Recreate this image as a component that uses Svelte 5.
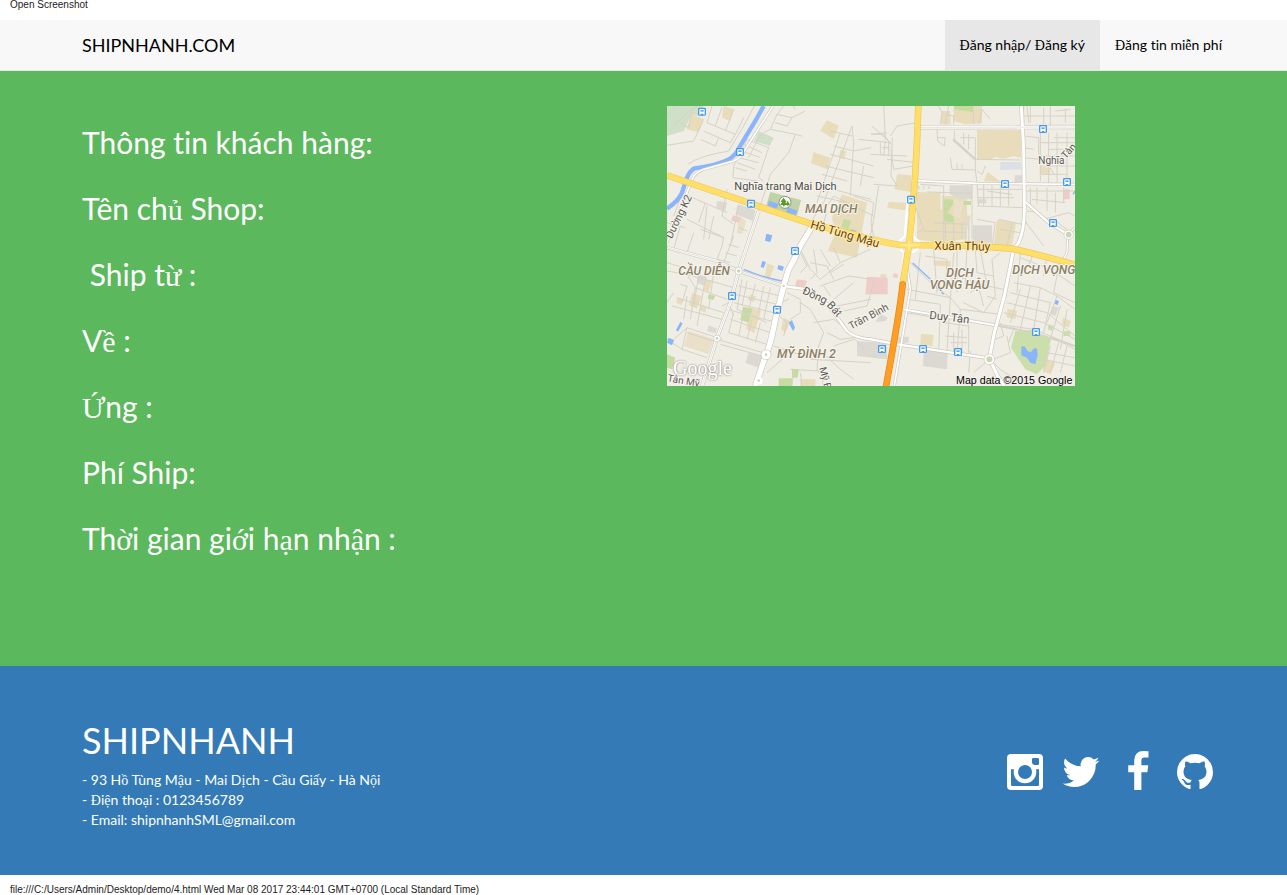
<script>
  const fields = [
    'Thông tin khách hàng:',
    'Tên chủ Shop:',
    '\u00a0Ship từ :',
    'Về :',
    'Ứng :',
    'Phí Ship:',
    'Thời gian giới hạn nhận :',
  ];

  const address = [
    '- 93 Hồ Tùng Mậu - Mai Dịch - Cầu Giấy - Hà Nội',
    '- Điện thoại : 0123456789',
    '- Email: shipnhanhSML@gmail.com',
  ];

  const nav = [
    { label: 'Đăng nhập/ Đăng ký', active: true },
    { label: 'Đăng tin miễn phí', active: false },
  ];

  // Vietnamese letters outside the brand font's basic set are set in the serif.
  const split = (text) => text.split(/([ĐđƠơƯư\u1ea0-\u1ef9]+)/).filter(Boolean);
  const isExtended = (part) => /^[ĐđƠơƯư\u1ea0-\u1ef9]/.test(part);

  const social = [
    { name: 'Twitter', d: 'M1684 408q-67 98-162 167 1 14 1 42 0 130-38 259.5t-115.5 248.5-184.5 210.5-258 146-323 54.5q-271 0-496-145 35 4 78 4 225 0 401-138-105-2-188-64.5t-114-159.5q33 5 61 5 43 0 85-11-112-23-185.5-111.5t-73.5-205.5v-4q68 38 146 41-66-44-105-115t-39-154q0-88 44-163 121 149 294.5 238.5t371.5 99.5q-8-38-8-74 0-134 94.5-228.5t228.5-94.5q140 0 236 102 109-21 205-78-37 115-142 178 93-10 186-50z' },
    { name: 'Facebook', d: 'M1343 12v264h-157q-86 0-116 36t-30 108v189h293l-39 296h-254v759h-306v-759h-255v-296h255v-218q0-186 104-288.5t277-102.5q147 0 228 12z' },
    { name: 'GitHub', d: 'M896 128q209 0 385.5 103t279.5 279.5 103 385.5q0 251-146.5 451.5t-378.5 277.5q-27 5-40-7t-13-30q0-3 .5-76.5t.5-134.5q0-97-52-142 57-6 102.5-18t94-39 81-66.5 53-105 20.5-150.5q0-119-79-206 37-91-8-204-28-9-81 11t-92 44l-38 24q-93-26-192-26t-192 26q-16-11-42.5-27t-83.5-38.5-85-13.5q-45 113-8 204-79 87-79 206 0 85 20.5 150t52.5 105 80.5 67 94 39 102.5 18q-39 36-49 103-21 10-45 15t-57 5-65.5-21.5-55.5-62.5q-19-32-48.5-52t-49.5-24l-20-3q-21 0-29 4.5t-5 11.5 9 14 13 12l7 5q22 10 43.5 38t31.5 51l10 23q13 38 44 61.5t67 30 69.5 7 55.5-3.5l23-4q0 38 .5 88.5t.5 54.5q0 18-13 30t-40 7q-232-77-378.5-277.5t-146.5-451.5q0-209 103-385.5t279.5-279.5 385.5-103z' },
  ];

  // Map drawing uses three units per pixel.
  const minor = [
    // north-west
    'M0 118L80 105L110 40M62 175Q95 150 185 135L230 60L262 0M20 60L65 15L90 0M40 50L65 65L75 10M0 30L30 0',
    'M120 50L135 0M120 50L205 85L230 35M110 75L190 110L205 85M145 60L165 5M175 75L200 10M100 100L145 120L155 95M330 25L375 35L415 15M325 50L360 60L375 35M350 0L330 25L310 70L385 85L365 140L310 205L275 315M310 70L290 80M385 85L405 90M385 10L375 -5',
    'M240 100L305 125L275 215L290 225M230 115L285 140M225 135L280 155M215 155L275 170M210 170L265 190M205 185L240 195M198 215L270 225M240 100L200 180L198 215M280 85L245 155M60 225L20 330M65 270L180 320M115 290L95 350M60 340L170 395L165 420M180 250L165 330L200 355M120 300L110 400M215 300L190 420M0 350L55 365M215 365L240 375',
    'M100 370L170 395M140 330L125 400M165 420L150 460L190 470M200 390L170 470M185 415L215 425M175 440L210 450M20 430L40 360M60 440L80 380',
    // north centre
    'M555 60L470 290L430 350M520 80L450 290M555 60L560 110L550 270M490 75L555 90M500 120L560 135L612 125M490 145L620 180M475 180L620 215M465 205L540 225M460 240L612 280M450 270L540 290M430 300L480 315M590 180L580 240M575 100L670 110M615 60L670 110M612 85L650 85L672 115M670 90L690 60L750 50M676 95L672 210L690 240L620 235M655 105L650 150M610 145L720 150M560 270L620 290L612 350L625 420M470 315L500 270L620 330',
    'M480 315L470 350M555 300L545 330M650 -5L655 100M612 85L660 80M635 240L620 340L610 390M740 180L680 190L672 130M750 170L660 160M640 110V145M665 110V150M645 125H670',
    // north-east
    'M815 0L825 20L820 55M845 0L835 55M835 25L860 30L860 55M920 55L918 10M935 55L945 10L970 40M810 70L812 105L832 120L835 95L812 95M862 75V100M862 100L925 160M880 95H925V160M890 80V115M905 85V130M925 160L1060 162M850 155L855 190L925 192V160M870 172V190M885 175V190M925 192L930 230M955 180L945 205L930 195M1070 0V50M1070 30H1224M1090 0V50M1130 5V55M1150 0V60M1165 15L1210 10M1195 10V50M1070 75V165M1070 90L1115 95V155M1070 125L1100 130M1070 155L1120 160M1120 80V225M1145 80V240M1170 80V240M1200 80V220M1120 110H1224M1145 130H1190M1120 150H1224M1120 180H1224M1125 205H1200M1160 95H1224M1150 185L1160 205M1080 0L1085 50',
    'M760 235L830 240L830 420M780 258L915 262M915 235V400M930 235L935 300M930 250H1070M950 235V300M975 235V300M1000 235V300M1025 235V300M930 275H1040M930 300L1070 305M960 255L1035 265M800 350L900 355M835 340V400M860 345V420M885 350V400M770 375L895 380M745 300L770 370L750 380M930 340L985 350L975 420M995 340L1065 355M1035 350L1020 420M1000 370L1060 380M1075 235L1070 290M1075 255H1224M1090 245V310M1110 245V295M1140 245V315M1165 260V320M1190 245V290M1095 280L1195 290M1080 315L1120 320M1130 340L1205 320L1224 330M1160 340L1205 375M1070 340L1130 420',
    // south-west
    'M0 495L60 505L85 545L70 640M30 575L170 620M15 600L165 640M60 505L200 545M85 545L180 580M95 510L80 600M115 520L90 660M140 500L125 610M60 570L50 640M0 590L20 560M40 535L60 540L45 590M60 665L165 700M60 665L45 730L120 755M60 680L140 705M20 700L60 665M0 700L45 730M180 610L330 650M165 600L185 590L200 630M0 470L100 500',
    'M225 520L210 610L300 650M240 525L225 600M265 535L245 610M290 540L275 620M310 545L290 640M215 540L340 570M205 565L330 595M200 590L320 620M190 640L310 680M200 620L185 680L300 715M230 620L215 690M255 640L240 700M280 650L265 710M150 700L305 745M160 715L285 750M340 590L365 580M325 620L360 650L350 690',
    'M400 430L430 490L460 520L520 470L610 430M400 500L420 480L400 440M440 430L450 500L430 520M460 430L490 480M430 470L480 480L500 520M490 500L530 475M500 425L520 470M460 540L545 510L612 520M500 580L560 530M510 600L612 580M530 615L600 600L620 530M360 560L400 580L400 620L370 640M400 590L430 610L470 680L455 720L450 790L470 820M440 650L500 640L540 670M480 680L520 700L560 695L590 730M500 720L560 700M455 730L520 790L560 820M370 790L460 795L470 840M320 720L440 760M380 800L375 840M400 800L405 840M300 800L345 760M430 760L612 770M490 570L470 540',
    // south centre and east
    'M730 470L800 540L850 575L880 610L1000 625M760 440L745 580M800 430L810 560M775 450L840 460L835 550M860 440L850 580L840 735M870 510L960 540M900 420L895 530M940 430L960 540L1010 550M870 425V560M720 550L850 575M725 580L820 595M715 620L840 640M820 595L815 740M880 610L870 740M890 590L950 620L985 570L975 460L1000 440M925 430L930 500L980 510M935 545L950 600M960 570L990 580M910 560L960 520M910 735L905 800M835 690L900 695M860 680V735M885 670V740M850 710H900M830 650L905 660M905 640V740',
    'M1060 440L1050 560M1060 455L1150 490L1224 540M1100 440L1085 480L1050 500M1140 450L1130 510M1180 460L1160 560L1224 590M1040 530L1120 545L1170 570L1140 650M1030 560L1150 590M1020 590L1140 620L1224 690M1010 620L1130 650L1224 700M995 655L1100 670L1224 720M1060 550L1030 650M1090 540L1060 670M1120 545L1100 670M1150 590L1130 680M1170 570L1224 610M1180 600L1150 700M1200 610L1180 730M1150 690L1224 730M1130 760L1224 780M1140 740L1224 755M1150 720L1130 800M1175 710L1150 800M1200 720L1180 800M1020 690L1030 740L980 760M970 760L1000 790L1060 830M920 800L960 765M1040 670L1025 710M1000 650L1010 690M985 700L1010 690',
  ];

  const whiteRoads = [
    { d: 'M318 0L270 75L235 130Q222 155 200 165L110 190Q85 200 78 215L60 260L0 410', w: 5 },
    { d: 'M0 425L150 465L215 495L350 540L420 550Q470 575 500 620L540 675Q560 695 612 700L692 715L967 757', w: 7 },
    { d: 'M275 315L240 420L215 495L190 590L150 695L105 840', w: 8 },
    { d: 'M436 360L400 420Q380 465 365 490Q355 520 350 540L325 640Q310 720 297 745L265 840', w: 16 },
    { d: 'M762 64L1224 63', w: 9 },
    { d: 'M1063 0L1070 130L1072 290Q1074 370 1055 410L1040 430L1012 570L982 680L967 757L992 810L1012 840', w: 9 },
    { d: 'M747 224L932 232L1224 235', w: 5 },
    { d: 'M1072 285L1145 350L1202 385', w: 7 },
    { d: 'M707 610L982 657', w: 6 },
    { d: 'M1202 385L1224 365M1202 385L1200 440L1180 480', w: 4 },
    { d: 'M712 430L730 550L682 840', w: 5 },
  ];

  const stops = [
    [105, 17], [219, 138], [252, 293], [384, 435], [195, 570], [330, 611],
    [1128, 69], [1014, 234], [1200, 228], [732, 281], [1158, 351],
    [645, 729], [768, 729], [873, 738], [1107, 678],
  ];
</script>

<div class="page">
  <p class="print">Open Screenshot</p>

  <header>
    <div class="container bar">
      <a class="brand" href="#home">SHIPNHANH.COM</a>
      <nav>
        {#each nav as item}
          <a href="#account" class:active={item.active}>{#each split(item.label) as part}{#if isExtended(part)}<span class="ext">{part}</span>{:else}{part}{/if}{/each}</a>
        {/each}
      </nav>
    </div>
  </header>

  <main>
    <div class="container columns">
      <section class="fields">
        {#each fields as field}
          <h2>{#each split(field) as part}{#if isExtended(part)}<span class="ext">{part}</span>{:else}{part}{/if}{/each}</h2>
        {/each}
      </section>

      <section class="place">
        <svg class="map" viewBox="0 0 1224 840" role="img" aria-label="Hồ Tùng Mậu">
          <rect width="1224" height="840" fill="#f0ede5" />

          <g fill="#d0dfc8">
            <path d="M0 0H110L95 30L75 25L50 75L0 90zM275 75L320 95L308 120L262 105z" />
            <path d="M310 258L402 282L390 330L295 308z" fill="#bfd3a6" />
          </g>
          <g fill="#e8dcbb">
            <path d="M170 0L200 10L190 45L165 35zM75 25L110 40L95 78L58 70zM480 42L515 60L500 98L460 75zM440 138L490 155L482 190L432 172zM520 132L538 136L532 160L516 156z" />
            <path d="M525 265L600 290L570 455L482 435L505 380L495 335zM825 15H850V55H822zM860 0H945V52L895 55L860 45zM930 72H1062V155L1040 150L1010 158L985 152L970 162H930zM690 205L732 208V258L682 250zM665 288L728 290V315L660 305z" />
            <path d="M750 258L820 260V310L912 330L890 400L820 410L750 400zM825 270H900V400H825zM990 342L1047 350L1035 420H980zM962 198L1002 228L950 226zM1120 182L1152 186L1148 205H1118z" />
            <path d="M75 562L105 570L90 608L65 598zM118 520L135 524L125 558L110 552zM102 595L120 602L115 620L98 612zM250 605L282 615L262 680L238 670zM250 565L268 572L260 588L242 582zM350 635L370 645L355 680L342 670zM300 472L322 480L308 518L294 508zM30 575L48 582L42 598L28 590z" />
            <path d="M762 684L800 686L796 720L760 716zM1022 608L1050 614L1045 640L1018 634zM1135 760L1165 770L1150 805L1128 795zM802 463L852 465L850 482L800 478zM1188 635L1212 645L1205 665L1184 655zM400 820H445V840H400zM642 503L660 506L655 516L640 512z" />
          </g>
          <g fill="#eadfc9">
            <path d="M65 675L140 700L125 745L50 720zM862 280L888 285L882 338L858 330zM215 330L238 345L225 385L210 380z" />
          </g>
          <g fill="#dcd9d3">
            <path d="M212 295L265 312L258 345L205 325zM150 285L180 290L175 315L148 305zM245 740L285 750L275 785L235 770zM770 730L842 735L840 790L768 780zM92 505L120 512L112 540L90 530zM125 658L150 668L145 682L120 675zM570 705L660 712V760L570 750zM692 692H725V710H692zM640 625L662 635L655 645L625 648z" />
            <path d="M848 238H915V280H880L848 265zM918 358H975V410H918zM932 280H958V292H932zM1043 208H1068V228H1043zM1158 600L1175 605L1165 630L1150 625z" />
            <path d="M1000 168H1062V190L1000 192z" fill="#dcdfe6" />
          </g>
          <g fill="#eecdc9">
            <path d="M198 328L222 334L216 350L192 344zM390 520L420 524L414 545L384 540zM600 512L662 515V565L595 565zM680 502L692 504V516L678 514zM1190 250H1208V280H1187z" />
          </g>
          <g fill="#c5dba0">
            <path d="M530 338L552 345L545 370L524 362zM228 602L256 608L245 650L220 642zM125 565L145 570L138 582L122 578zM158 490L170 494L166 506L154 502zM0 745L25 755L15 790L0 785zM375 788L395 790L392 815H375zM335 817H375V840H335zM862 0H920L918 18L862 10zM830 280H858V295L840 320L860 330V350L830 345zM890 285H912V297H890z" />
            <path d="M1045 675L1095 672L1152 698L1135 780L1110 805L1075 790L1055 760L1032 725zM1145 655L1160 660L1155 675L1142 670zM1190 675H1210V690H1190z" fill="#cbdfaa" />
          </g>

          <g fill="none" stroke="#d6d2c6" stroke-width="3" stroke-linejoin="round">
            {#each minor as d}<path {d} />{/each}
            <path d="M858 100L925 160" stroke-width="7" />
            <path d="M982 657L1100 680L1224 720" stroke-width="6" />
          </g>
          <path d="M895 335V420M905 335V420M755 240V250M770 240V250M785 240V250" stroke="#dcd9d3" stroke-width="5" />

          <g fill="#8ab4fb">
            <path d="M306 284L335 294L325 315L300 306zM362 303L392 315L385 328L357 320zM298 383L316 388L310 408L294 404zM552 370L568 375L564 386L550 382zM286 465L297 468L290 486L281 483zM334 477L351 482L346 495L331 489zM375 642L384 665L378 675L365 650zM40 648L47 652L33 677L27 672zM5 695L21 702L15 718L0 710zM1166 582L1176 585L1172 597L1163 594z" />
            <path d="M1063 722L1072 720L1082 736L1092 738L1102 726L1110 728L1112 748L1105 775L1090 770L1080 755L1063 748z" />
          </g>
          <g fill="none" stroke="#8ab4fb">
            <path d="M290 0L265 45L218 122Q205 150 185 160Q150 178 82 187Q68 195 60 215L45 260Q35 285 0 308" stroke-width="13" />
            <path d="M230 490Q290 515 345 525M737 471L790 520L830 565M1224 255L1218 265" stroke-width="4" />
          </g>

          <g fill="none" stroke-linejoin="round">
            {#each whiteRoads as road}<path d={road.d} stroke="#cfcabe" stroke-width={road.w + 4} />{/each}
            {#each whiteRoads as road}<path d={road.d} stroke="#ffffff" stroke-width={road.w} />{/each}
            <path d="M0 425L150 465L215 495L350 540M275 315L240 420L215 495L190 590L150 695L105 840M762 64L1224 63" stroke="#d6d2c8" stroke-width="2" />
            <path d="M745 280L738 390L760 412M710 285M722 280L714 390L695 408M700 430L712 440L706 500M755 426L735 440" stroke="#ffffff" stroke-width="7" />
            <path d="M0 208L430 353L560 385Q640 408 700 417L900 418L1036 428Q1110 445 1224 476" stroke="#e9c867" stroke-width="20" />
            <path d="M754 0Q748 220 727 410L707 535" stroke="#e9c867" stroke-width="20" />
            <path d="M0 208L430 353L560 385Q640 408 700 417L900 418L1036 428Q1110 445 1224 476" stroke="#ffdf67" stroke-width="16" />
            <path d="M754 0Q748 220 727 410L707 535" stroke="#ffdf67" stroke-width="16" />
            <path d="M707 536Q698 620 655 852" stroke="#e08a1c" stroke-width="20" stroke-linecap="round" />
            <path d="M707 536Q698 620 655 852" stroke="#ff9d24" stroke-width="16" stroke-linecap="round" />
            <path d="M700 418H757M727 404V432" stroke="#ffe896" stroke-width="6" />
          </g>

          <g fill="#c9d6b8" stroke="#ffffff" stroke-width="5">
            <circle cx="215" cy="495" r="8" />
            <circle cx="150" cy="697" r="7" />
            <circle cx="297" cy="746" r="9" stroke-width="10" />
            <circle cx="275" cy="824" r="8" stroke-width="8" />
            <circle cx="350" cy="540" r="6" />
            <circle cx="967" cy="760" r="12" stroke-width="6" />
            <circle cx="1205" cy="386" r="11" />
          </g>
          <g fill="none" stroke="#cfcabe" stroke-width="2">
            <circle cx="215" cy="495" r="11" />
            <circle cx="150" cy="697" r="10" />
            <circle cx="297" cy="746" r="15" />
            <circle cx="967" cy="760" r="16" />
            <circle cx="1205" cy="386" r="14" />
          </g>

          {#each stops as [x, y]}
            <g transform="translate({x} {y})">
              <rect x="-12" y="-12" width="24" height="24" rx="4" fill="#469be8" />
              <rect x="-8" y="-8" width="16" height="14" rx="2" fill="#ffffff" />
              <rect x="-5" y="-5" width="10" height="5" fill="#5faaf0" />
              <path d="M-6 5V9M6 5V9" stroke="#ffffff" stroke-width="4" />
            </g>
          {/each}

          <circle cx="354" cy="289" r="18" fill="#ffffff" stroke="#8d9583" stroke-width="3" />
          <path d="M350 275L340 288H346L339 297H348V301H353V297H361L355 288H359zM362 284L356 297H361V301H364V297H369z" fill="#5a9a25" />

          <g class="labels">
            <text x="202" y="252" font-size="33">Nghĩa trang Mai Dịch</text>
            <g class="district">
              <text x="414" y="321" font-size="37">MAI DỊCH</text>
              <text x="34" y="507" font-size="36">CẦU DIỄN</text>
              <text x="330" y="756" font-size="37">MỸ ĐÌNH 2</text>
              <text x="838" y="514" font-size="37">DỊCH</text>
              <text x="788" y="550" font-size="37">VỌNG HẬU</text>
              <text x="1036" y="504" font-size="37">DỊCH VỌNG</text>
            </g>
            <g class="highway">
              <text transform="translate(428 366) rotate(16)" font-size="36">Hồ Tùng Mậu</text>
              <text transform="translate(802 431) rotate(1)" font-size="36">Xuân Thủy</text>
            </g>
            <g class="street">
              <text transform="translate(14 400) rotate(-64)" font-size="32">Dường K2</text>
              <text transform="translate(1114 173)" font-size="30">Nghĩa</text>
              <text transform="translate(1196 160) rotate(-48)" font-size="30">Tân</text>
              <text transform="translate(404 562) rotate(25)" font-size="33">Đồng</text>
              <text transform="translate(478 598) rotate(48)" font-size="33">Bát</text>
              <text transform="translate(552 671) rotate(-28)" font-size="31">Trần Bình</text>
              <text transform="translate(786 638) rotate(7)" font-size="34">Duy Tân</text>
              <text transform="translate(0 826) rotate(10)" font-size="30">Tân Mỹ</text>
              <text transform="translate(457 786) rotate(76)" font-size="30">Mỹ Đình</text>
            </g>
          </g>

          <text class="logo" x="18" y="808">Google</text>
          <text class="credit" x="1216" y="834" text-anchor="end">Map data ©2015 Google</text>
        </svg>
      </section>
    </div>
  </main>

  <footer>
    <div class="container foot">
      <div>
        <h1>SHIPNHANH</h1>
        <address>
          {#each address as line}
            <p>{#each split(line) as part}{#if isExtended(part)}<span class="ext">{part}</span>{:else}{part}{/if}{/each}</p>
          {/each}
        </address>
      </div>
      <div class="social">
        <a href="#instagram" aria-label="Instagram">
          <svg viewBox="-12 -9 126 126">
            <path fill-rule="evenodd" d="M12 0H96Q108 0 108 12V96Q108 108 96 108H12Q0 108 0 96V12Q0 0 12 0zM79 12Q75 12 75 16V29Q75 33 79 33H92Q96 33 96 29V16Q96 12 92 12zM12 46V92Q12 96 16 96H92Q96 96 96 92V46z" />
            <circle cx="54" cy="54" r="34" />
            <circle class="hole" cx="54" cy="54" r="21" />
          </svg>
        </a>
        {#each social as icon}
          <a href="#{icon.name.toLowerCase()}" aria-label={icon.name}>
            <svg viewBox="0 0 1792 1792"><path d={icon.d} /></svg>
          </a>
        {/each}
      </div>
    </div>
  </footer>

  <p class="print end">file:///C:/Users/Admin/Desktop/demo/4.html Wed Mar 08 2017 23:44:01 GMT+0700 (Local Standard Time)</p>
</div>

<style>
  :global(body) {
    margin: 0;
    background: #ffffff;
  }

  .page {
    font-family: Lato, "Liberation Serif", serif;
    font-size: 14px;
    font-variant-ligatures: none;
    line-height: 20px;
    color: #000000;
  }

  .ext {
    font-family: "Liberation Serif", serif;
    line-height: 1;
  }

  p, h1, h2 {
    margin: 0;
    font-weight: 400;
  }

  a {
    color: inherit;
    text-decoration: none;
  }

  .print {
    height: 20px;
    padding-left: 10px;
    font-family: "Liberation Sans", Arial, sans-serif;
    font-size: 10px;
    line-height: 10px;
    color: #222222;
    box-sizing: border-box;
  }

  .end {
    padding-top: 10px;
  }

  header, main, footer {
    padding-left: 17px;
  }

  .container {
    box-sizing: border-box;
    max-width: 1170px;
    margin: 0 auto;
    padding: 0 15px;
  }

  header {
    background: #f8f8f8;
    border-bottom: 1px solid #e7e7e7;
  }

  .bar {
    display: flex;
    justify-content: space-between;
    padding-right: 0;
  }

  .brand {
    padding: 15px 0;
    font-size: 18px;
  }

  nav {
    display: flex;
  }

  nav a {
    padding: 15px;
  }

  .active {
    background: #e7e7e7;
  }

  main {
    background: #5cb85c;
    color: #ffffff;
  }

  .columns {
    display: grid;
    grid-template-columns: 1fr 1fr;
    gap: 30px;
    padding-top: 35px;
    padding-bottom: 111px;
  }

  .fields {
    display: grid;
    gap: 33px;
    padding-top: 20px;
  }

  h2 {
    font-size: 30px;
    line-height: 33px;
  }

  .map {
    display: block;
    width: 100%;
    max-width: 408px;
    height: auto;
  }

  .labels {
    font-family: Roboto, sans-serif;
    fill: #4d4a44;
    stroke: #f7f5f0;
    stroke-width: 6px;
    stroke-linejoin: round;
    paint-order: stroke;
  }

  .district {
    font-style: italic;
    font-weight: 500;
    fill: #8c7f63;
  }

  .highway {
    fill: #6b4410;
    stroke: #ffeeb0;
  }

  .street {
    fill: #5c5850;
  }

  .logo {
    font-family: "Liberation Serif", serif;
    font-size: 60px;
    fill: #ffffff;
    filter: drop-shadow(0 0 3px #77746d);
  }

  .credit {
    font-family: "Liberation Sans", Arial, sans-serif;
    font-size: 32px;
    fill: #000000;
    stroke: #f3f0ea;
    stroke-width: 5px;
    paint-order: stroke;
  }

  footer {
    background: #337ab7;
    color: #ffffff;
  }

  .foot {
    display: flex;
    align-items: flex-start;
    justify-content: space-between;
    padding-top: 54px;
    padding-bottom: 45px;
  }

  h1 {
    margin-bottom: 10px;
    font-size: 36px;
    line-height: 40px;
  }

  address {
    font-style: normal;
  }

  .social {
    display: flex;
    gap: 15px;
    padding-top: 31px;
    padding-right: 6px;
  }

  .social svg {
    display: block;
    width: 42px;
    height: 42px;
    fill: #ffffff;
  }

  .social .hole {
    fill: #337ab7;
  }
</style>
